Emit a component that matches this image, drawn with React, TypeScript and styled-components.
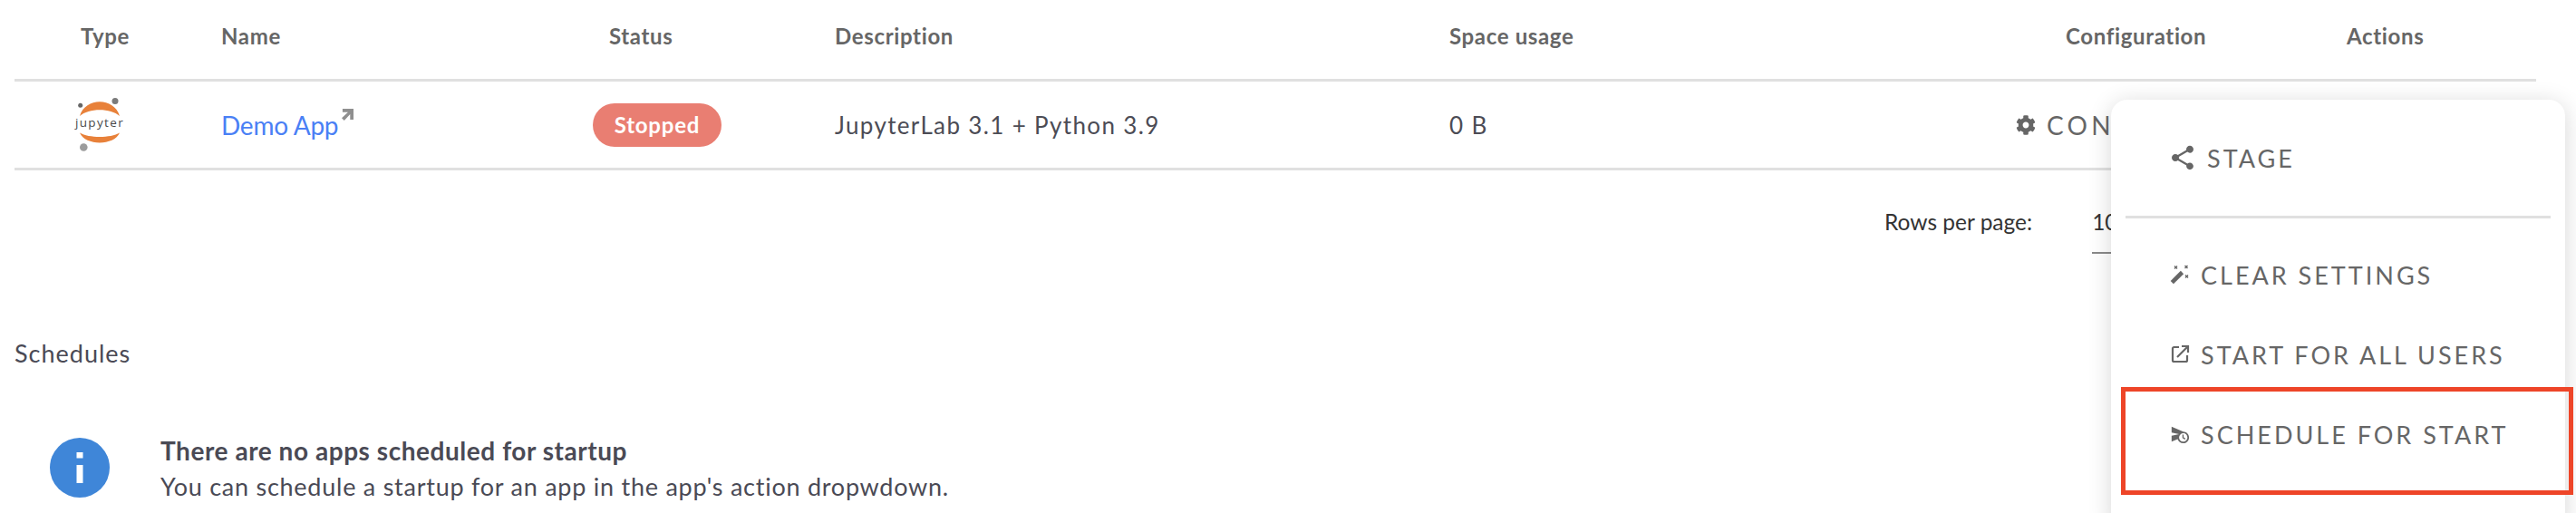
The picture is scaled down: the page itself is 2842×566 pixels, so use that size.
import React from 'react';
import styled, { createGlobalStyle } from 'styled-components';
import { FaCog } from 'react-icons/fa';
import { MdScheduleSend, MdShare } from 'react-icons/md';

const GlobalStyle = createGlobalStyle`
  html, body {
    margin: 0;
    background: #fff;
    overflow: hidden;
  }
  body {
    font-family: Lato, "Open Sans", sans-serif;
  }
`;

const Page = styled.div`
  position: relative;
  width: 2842px;
  height: 566px;
  overflow: hidden;
`;

const Table = styled.div`
  margin: 0 44px 0 16px;
`;

const Row = styled.div<{ $height: number; $pushUp?: number }>`
  display: grid;
  grid-template-columns: 228px 410px 267px 678px 625px 365px 209px;
  align-items: center;
  height: ${p => p.$height}px;
  box-sizing: border-box;
  padding-bottom: ${p => p.$pushUp ?? 0}px;
  border-bottom: 3px solid #e0e0e0;
`;

const HeadCell = styled.div<{ $indent?: number }>`
  padding-left: ${p => p.$indent ?? 0}px;
  font-size: 24px;
  font-weight: 700;
  letter-spacing: 0.65px;
  color: #666;
`;

const Cell = styled.div<{ $indent?: number }>`
  display: flex;
  align-items: center;
  padding-left: ${p => p.$indent ?? 0}px;
  font-size: 26px;
  letter-spacing: 1.35px;
  color: #4c4c55;
`;

const AppLink = styled.a`
  display: flex;
  align-items: flex-start;
  font-size: 28px;
  letter-spacing: -0.25px;
  color: #4a80f5;
`;

const LinkArrow = styled.svg`
  width: 13px;
  height: 13px;
  margin: -1px 0 0 4px;
  fill: #8f8f8f;
`;

const Badge = styled.span`
  display: flex;
  align-items: center;
  justify-content: center;
  width: 142px;
  height: 48px;
  border-radius: 24px;
  background: #e97e72;
  color: #fff;
  font-size: 24px;
  font-weight: 700;
  letter-spacing: 0.8px;
`;

const ConfigureButton = styled.span`
  display: flex;
  align-items: center;
  gap: 12px;
  font-size: 28px;
  letter-spacing: 4.2px;
  color: #666;
  white-space: nowrap;
`;

const Pagination = styled.div`
  display: flex;
  align-items: flex-start;
  height: 114px;
  padding: 42px 0 0 2079px;
  box-sizing: border-box;
  font-size: 24.5px;
  color: #333;
`;

const PageSize = styled.div`
  width: 80px;
  height: 48px;
  margin-left: 66px;
  border-bottom: 2px solid #8a8a8a;
`;

const SectionTitle = styled.h2`
  margin: 0;
  padding: 72px 0 0 16px;
  font-size: 27px;
  font-weight: 400;
  letter-spacing: 1px;
  line-height: 32px;
  color: #4a4a55;
`;

const Notice = styled.div`
  display: flex;
  gap: 56px;
  padding: 77px 0 0 55px;
`;

const InfoBadge = styled.svg`
  flex: none;
  width: 66px;
  height: 66px;
`;

const NoticeText = styled.div`
  display: flex;
  flex-direction: column;
  gap: 8px;
  margin-top: -2px;
  line-height: 32px;
  color: #4a4a55;
`;

const NoticeTitle = styled.div`
  font-size: 28px;
  font-weight: 700;
  letter-spacing: 0.55px;
`;

const NoticeBody = styled.div`
  font-size: 27px;
  letter-spacing: 0.75px;
`;

const Menu = styled.div`
  position: absolute;
  top: 110px;
  left: 2329px;
  width: 501px;
  height: 480px;
  box-sizing: border-box;
  padding: 0 16px;
  border-radius: 18px;
  background: #fff;
  box-shadow: 0 4px 26px rgba(0, 0, 0, 0.16);
`;

const MenuDivider = styled.div`
  height: 3px;
  margin-bottom: 18px;
  background: #e0e0e0;
`;

const MenuItem = styled.div<{ $height: number; $large?: boolean }>`
  display: flex;
  align-items: center;
  height: ${p => p.$height}px;
  padding-left: ${p => (p.$large ? 47 : 49)}px;
  font-size: 27px;
  letter-spacing: 3px;
  color: #666;
  white-space: nowrap;

  & > svg {
    flex: none;
    width: ${p => (p.$large ? 32 : 22)}px;
    height: ${p => (p.$large ? 32 : 22)}px;
    margin-right: ${p => (p.$large ? 11 : 12)}px;
    color: #666;
  }
`;

const Highlight = styled.div`
  position: absolute;
  top: 427px;
  left: 2340px;
  width: 499px;
  height: 119px;
  box-sizing: border-box;
  border: 5px solid #ee4528;
  pointer-events: none;
`;

const LogoText = styled.text`
  font-family: "Open Sans", sans-serif;
  font-size: 13.5px;
  fill: #4a4a4a;
`;

const LogoBox = styled.svg`
  width: 54px;
  height: 66px;
  overflow: visible;
`;

const JupyterLogo = () => (
  <LogoBox viewBox="0 0 54 66">
    <circle cx="43" cy="6.5" r="3.5" fill="#7b7b7b" />
    <circle cx="4.7" cy="11.2" r="2.5" fill="#666" />
    <circle cx="8.3" cy="57.5" r="4.3" fill="#9c9c9c" />
    <path d="M4 23C10 2 42 2 48 23C38 14 14 14 4 23Z" fill="#e8813a" />
    <path d="M4 41.5C10 56 42 56 48 41.5C38 47.5 14 47.5 4 41.5Z" fill="#e8813a" />
    <LogoText x="26" y="35" textAnchor="middle">jupyter</LogoText>
  </LogoBox>
);

const WandIcon = () => (
  <svg viewBox="0 0 22 22" fill="none" stroke="currentColor">
    <path d="M2.3 19.7L13.5 8.5" strokeWidth="4.6" />
    <path d="M5 1.5l3 3M8 1.5l-3 3M16.5 1l3 3M19.5 1l-3 3M17 11.5l3 3M20 11.5l-3 3" strokeWidth="1.4" />
  </svg>
);

const LaunchIcon = () => (
  <svg viewBox="0 0 22 22" fill="none" stroke="currentColor" strokeWidth="2.2">
    <path d="M10 3H4.5A1.5 1.5 0 0 0 3 4.5v13A1.5 1.5 0 0 0 4.5 19h13a1.5 1.5 0 0 0 1.5-1.5V12" />
    <path d="M8 14L19.5 2.5M13 2h7v7" />
  </svg>
);

const App: React.FC = () => (
  <Page>
    <GlobalStyle />
    <Table>
      <Row $height={90} $pushUp={8}>
        <HeadCell $indent={73}>Type</HeadCell>
        <HeadCell>Name</HeadCell>
        <HeadCell $indent={18}>Status</HeadCell>
        <HeadCell>Description</HeadCell>
        <HeadCell>Space usage</HeadCell>
        <HeadCell $indent={55}>Configuration</HeadCell>
        <HeadCell>Actions</HeadCell>
      </Row>
      <Row $height={98}>
        <Cell $indent={68}><JupyterLogo /></Cell>
        <Cell>
          <AppLink>
            Demo App
            <LinkArrow viewBox="0 0 14 14">
              <path d="M1 0h13v13h-4V6.5L3 14 0 11 7.5 4H1z" />
            </LinkArrow>
          </AppLink>
        </Cell>
        <Cell><Badge>Stopped</Badge></Cell>
        <Cell>JupyterLab 3.1 + Python 3.9</Cell>
        <Cell>0 B</Cell>
        <Cell>
          <ConfigureButton>
            <FaCog size={22} />
            CONFIGURE
          </ConfigureButton>
        </Cell>
        <Cell />
      </Row>
    </Table>

    <Pagination>
      Rows per page:
      <PageSize>10</PageSize>
    </Pagination>

    <SectionTitle>Schedules</SectionTitle>
    <Notice>
      <InfoBadge viewBox="0 0 66 66">
        <circle cx="33" cy="33" r="33" fill="#3f86d8" />
        <rect x="29.5" y="16" width="7" height="6.5" fill="#fff" />
        <rect x="29.5" y="30" width="7" height="20" fill="#fff" />
      </InfoBadge>
      <NoticeText>
        <NoticeTitle>There are no apps scheduled for startup</NoticeTitle>
        <NoticeBody>You can schedule a startup for an app in the app's action dropwdown.</NoticeBody>
      </NoticeText>
    </Notice>

    <Menu>
      <MenuItem $height={128} $large><MdShare />STAGE</MenuItem>
      <MenuDivider />
      <MenuItem $height={88}><WandIcon />CLEAR SETTINGS</MenuItem>
      <MenuItem $height={88}><LaunchIcon />START FOR ALL USERS</MenuItem>
      <MenuItem $height={88}><MdScheduleSend />SCHEDULE FOR START</MenuItem>
    </Menu>
    <Highlight />
  </Page>
);

export default App;
